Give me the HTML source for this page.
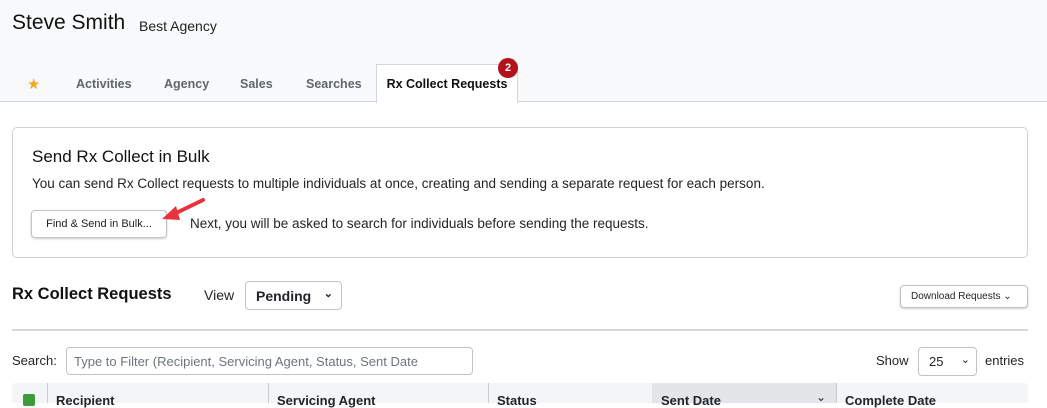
<!DOCTYPE html>
<html><head><style>
*{box-sizing:border-box;margin:0;padding:0}
body{width:1047px;height:401px;overflow:hidden;background:#fff;font-family:"Liberation Sans",sans-serif;color:#212529;position:relative}
.hdr{position:absolute;left:0;top:0;width:1047px;height:102px;background:#f8f9fa;border-bottom:1px solid #d3d6da}
.a{position:absolute;white-space:nowrap}
.tab{position:absolute;top:77px;font-size:12.5px;font-weight:bold;color:#5f6670}
.act{position:absolute;left:376px;top:64px;width:142px;height:39px;background:#fff;border:1px solid #d3d6da;border-bottom:none;font-size:12.5px;font-weight:bold;color:#111;text-align:center;line-height:38px}
.badge{position:absolute;left:498px;top:58px;width:20px;height:20px;border-radius:50%;background:#b3121b;color:#fff;font-size:11px;font-weight:bold;text-align:center;line-height:20px}
.card{position:absolute;left:12px;top:127px;width:1016px;height:131px;border:1px solid #cfd3d7;border-radius:5px}
.btn{position:absolute;left:31px;top:210px;width:136px;height:28px;border:1px solid #bfc4c9;border-radius:4px;font-size:11px;text-align:center;line-height:26px;color:#222;box-shadow:0 1px 2px rgba(0,0,0,.2)}
.sel{position:absolute;border:1px solid #bfc4c9;border-radius:4px;font-size:14px;background:#fff}
</style></head><body>
<div class="hdr"></div>
<div class="a" style="left:12px;top:11px;font-size:21px;color:#111">Steve Smith</div>
<div class="a" style="left:139px;top:18px;font-size:14px;color:#222">Best Agency</div>
<div class="a" style="left:27px;top:75px;font-size:15px;color:#f5a623">★</div>
<div class="tab" style="left:76px">Activities</div>
<div class="tab" style="left:164px">Agency</div>
<div class="tab" style="left:240px">Sales</div>
<div class="tab" style="left:306px">Searches</div>
<div class="act">Rx Collect Requests</div>
<div class="badge">2</div>
<div class="card"></div>
<div class="a" style="left:32px;top:147px;font-size:17px;color:#111">Send Rx Collect in Bulk</div>
<div class="a" style="left:32px;top:176px;font-size:13.5px">You can send Rx Collect requests to multiple individuals at once, creating and sending a separate request for each person.</div>
<div class="btn">Find &amp; Send in Bulk...</div>
<div class="a" style="left:190px;top:216px;font-size:13.5px">Next, you will be asked to search for individuals before sending the requests.</div>
<svg class="a" style="left:158px;top:196px" width="50" height="30"><line x1="45" y1="4" x2="14" y2="19" stroke="#e8333c" stroke-width="4" stroke-linecap="round"/><polygon points="4,23 18,10 22,24" fill="#e8333c"/></svg>
<div class="a" style="left:12px;top:285px;font-size:16.5px;font-weight:bold;color:#111">Rx Collect Requests</div>
<div class="a" style="left:204px;top:287px;font-size:14px">View</div>
<div class="sel" style="left:245px;top:281px;width:97px;height:29px;padding:6px 10px;font-weight:bold">Pending<span style="position:absolute;right:8px;top:5px;font-size:11px">&#8964;</span></div>
<div class="sel" style="left:900px;top:285px;width:128px;height:23px;font-size:10px;padding:5px 10px;box-shadow:0 1px 2px rgba(0,0,0,.2)">Download Requests ⌄</div>
<div class="a" style="left:12px;top:329px;width:1016px;height:2px;background:#d6d9dc"></div>
<div class="a" style="left:12px;top:353px;font-size:13px">Search:</div>
<div class="sel" style="left:66px;top:347px;width:407px;height:28px;font-size:13px;color:#6c757d;padding:6px 7px;overflow:hidden">Type to Filter (Recipient, Servicing Agent, Status, Sent Date</div>
<div class="a" style="left:876px;top:353px;font-size:13px">Show</div>
<div class="sel" style="left:918px;top:347px;width:59px;height:29px;font-size:13px;padding:6px 10px">25<span style="position:absolute;right:6px;top:5px;font-size:11px">⌄</span></div>
<div class="a" style="left:985px;top:353px;font-size:13px">entries</div>
<div class="a" style="left:12px;top:383px;width:1016px;height:20px;background:#f4f5f6;border-radius:4px 4px 0 0"></div>
<div class="a" style="left:652px;top:383px;width:184px;height:20px;background:#e3e5e8"></div>
<div class="a" style="left:23px;top:394px;width:12px;height:12px;background:#3c9c3c;border-radius:2px"></div>
<div class="a" style="left:47px;top:383px;width:1px;height:20px;background:#ccc"></div>
<div class="a" style="left:268px;top:383px;width:1px;height:20px;background:#ccc"></div>
<div class="a" style="left:488px;top:383px;width:1px;height:20px;background:#ccc"></div>
<div class="a" style="left:836px;top:383px;width:1px;height:20px;background:#ccc"></div>
<div class="a" style="left:56px;top:393px;font-size:13px;font-weight:bold">Recipient</div>
<div class="a" style="left:277px;top:393px;font-size:13px;font-weight:bold">Servicing Agent</div>
<div class="a" style="left:497px;top:393px;font-size:13px;font-weight:bold">Status</div>
<div class="a" style="left:661px;top:393px;font-size:13px;font-weight:bold">Sent Date</div>
<div class="a" style="left:816px;top:390px;font-size:12px">⌄</div>
<div class="a" style="left:845px;top:393px;font-size:13px;font-weight:bold">Complete Date</div>
</body></html>
